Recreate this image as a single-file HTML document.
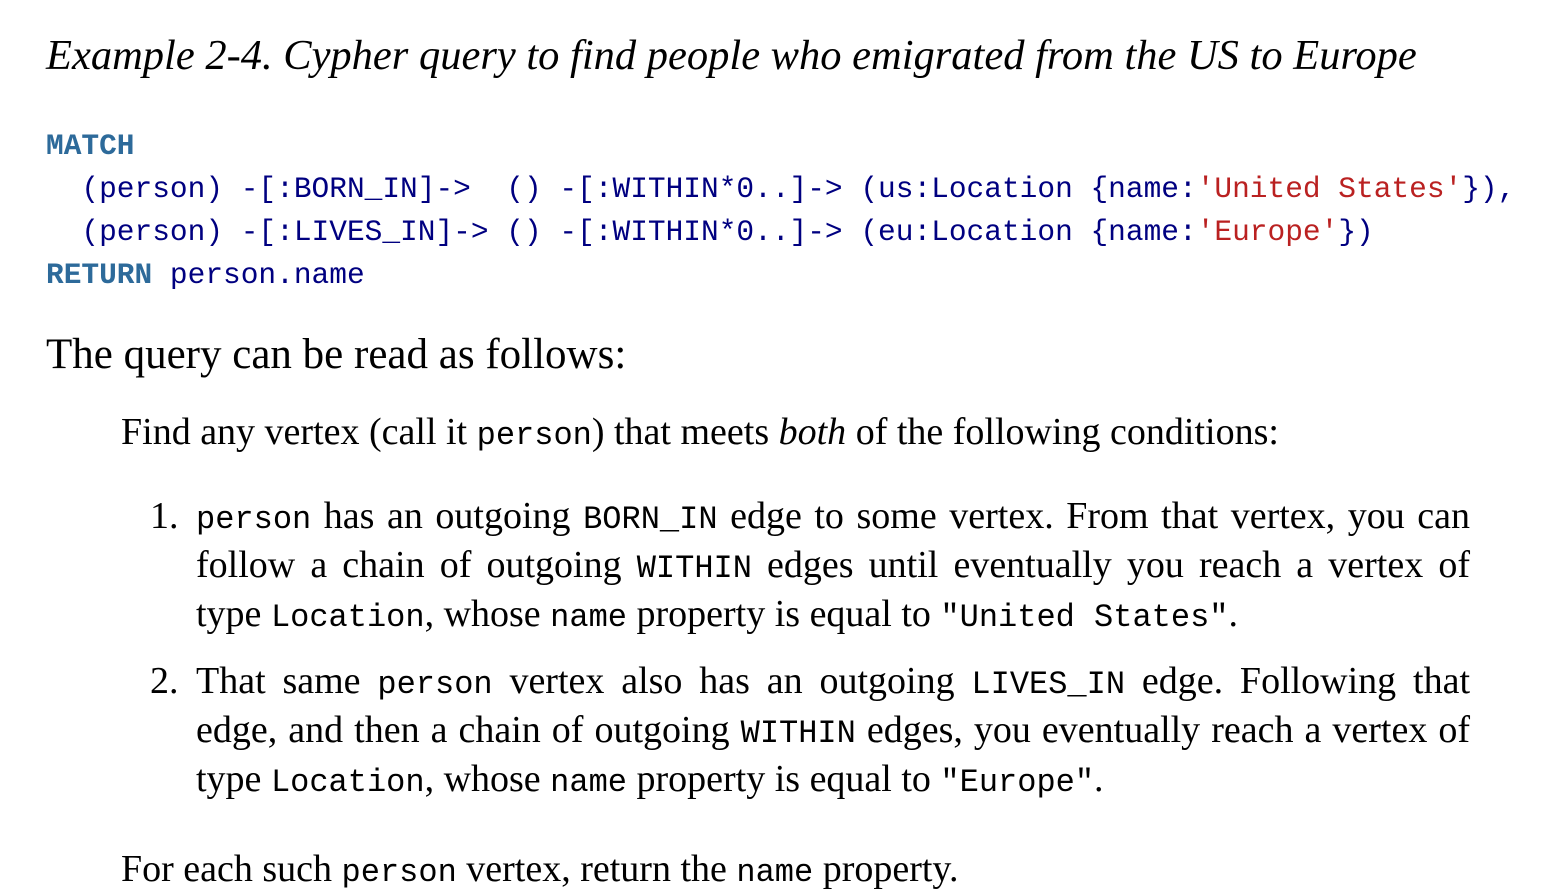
<html><head><style>
body{margin:0;background:#fff;width:1556px;height:892px;overflow:hidden;font-family:"Liberation Serif",serif;color:#000}
.a{position:absolute;white-space:nowrap}
.t{left:46px;top:31px;font-size:42.5px;font-style:italic}
pre{position:absolute;left:46px;top:125px;margin:0;font-family:"Liberation Mono",monospace;font-size:29.5px;line-height:43px;color:#000080}
.k{color:#2d6a9a;font-weight:bold}.s{color:#ba2121}
code{font-family:"Liberation Mono",monospace;font-size:32px;line-height:1}
.p{font-size:43px}
.b{font-size:38px}
.li{position:absolute;left:196px;width:1274px;font-size:38px;line-height:49px}
.li div{text-align:justify;text-align-last:justify;white-space:nowrap;height:49px}
.li div.l{text-align-last:left}
.n{position:absolute;font-size:38px}
</style></head><body>
<div class="a t">Example 2-4. Cypher query to find people who emigrated from the US to Europe</div>
<pre><span class="k">MATCH</span>
  (person) -[:BORN_IN]->  () -[:WITHIN*0..]-> (us:Location {name:<span class="s">'United States'</span>}),
  (person) -[:LIVES_IN]-> () -[:WITHIN*0..]-> (eu:Location {name:<span class="s">'Europe'</span>})
<span class="k">RETURN</span> person.name</pre>
<div class="a p" style="left:46px;top:330px">The query can be read as follows:</div>
<div class="a b" style="left:121px;top:410px">Find any vertex (call it <code>person</code>) that meets <i>both</i> of the following conditions:</div>
<div class="n" style="left:150px;top:494px">1.</div>
<div class="li" style="top:492px"><div><code>person</code> has an outgoing <code>BORN_IN</code> edge to some vertex. From that vertex, you can</div><div>follow a chain of outgoing <code>WITHIN</code> edges until eventually you reach a vertex of</div><div class="l">type <code>Location</code>, whose <code>name</code> property is equal to <code>"United States"</code>.</div></div>
<div class="n" style="left:150px;top:659px">2.</div>
<div class="li" style="top:657px"><div>That same <code>person</code> vertex also has an outgoing <code>LIVES_IN</code> edge. Following that</div><div>edge, and then a chain of outgoing <code>WITHIN</code> edges, you eventually reach a vertex of</div><div class="l">type <code>Location</code>, whose <code>name</code> property is equal to <code>"Europe"</code>.</div></div>
<div class="a b" style="left:121px;top:847px">For each such <code>person</code> vertex, return the <code>name</code> property.</div>
</body></html>
